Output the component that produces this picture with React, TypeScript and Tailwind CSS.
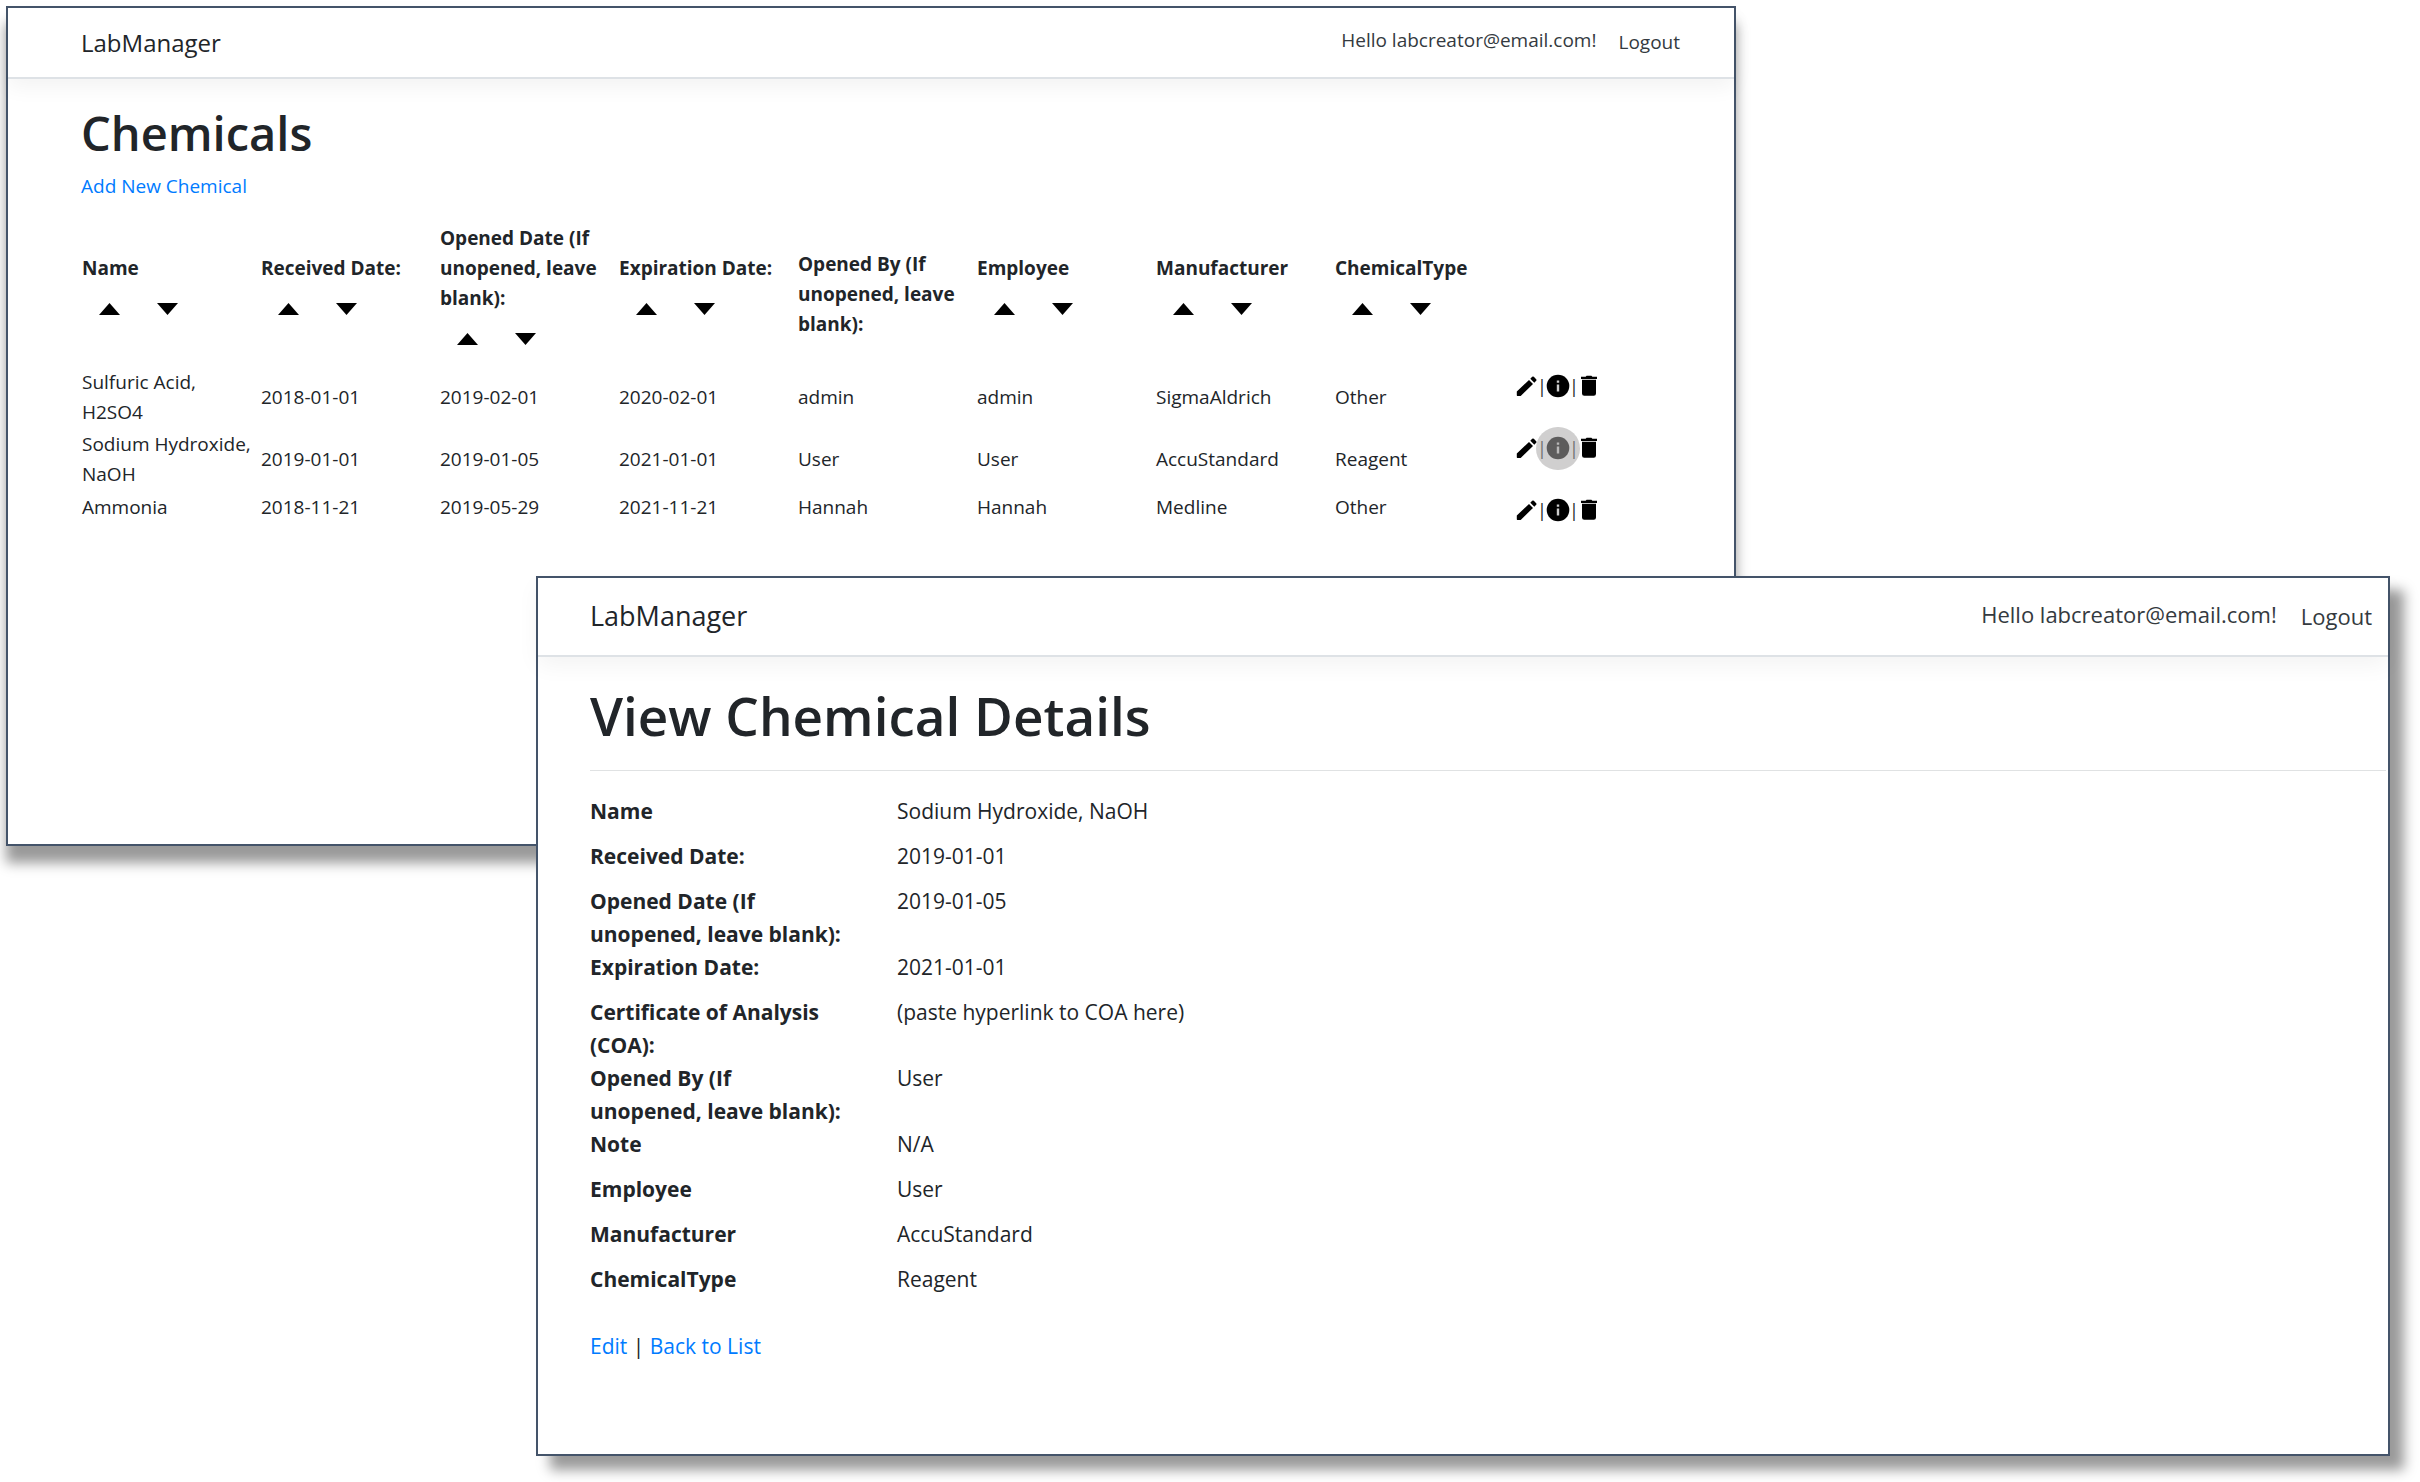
import React from "react";

const labels = ["Name", "Received Date:", "Opened Date (If unopened, leave blank):", "Expiration Date:", "Opened By (If unopened, leave blank):", "Employee", "Manufacturer", "ChemicalType"];

const rows = [
  ["Sulfuric Acid, H2SO4", "2018-01-01", "2019-02-01", "2020-02-01", "admin", "admin", "SigmaAldrich", "Other"],
  ["Sodium Hydroxide, NaOH", "2019-01-01", "2019-01-05", "2021-01-01", "User", "User", "AccuStandard", "Reagent"],
  ["Ammonia", "2018-11-21", "2019-05-29", "2021-11-21", "Hannah", "Hannah", "Medline", "Other"],
];

const details = [
  ["Name", "Sodium Hydroxide, NaOH"],
  ["Received Date:", "2019-01-01"],
  ["Opened Date (If unopened, leave blank):", "2019-01-05"],
  ["Expiration Date:", "2021-01-01"],
  ["Certificate of Analysis (COA):", "(paste hyperlink to COA here)"],
  ["Opened By (If unopened, leave blank):", "User"],
  ["Note", "N/A"],
  ["Employee", "User"],
  ["Manufacturer", "AccuStandard"],
  ["ChemicalType", "Reagent"],
];

function SortButtons({ label }: { label: string }) {
  return (
    <div className="flex gap-1">
      <button type="button" aria-label={`Sort ${label} ascending`} className="flex h-[52px] w-[54px] items-center justify-center">
        <svg width="21" height="12" viewBox="0 0 21 12"><path d="M10.5 0 21 12H0z" /></svg>
      </button>
      <button type="button" aria-label={`Sort ${label} descending`} className="flex h-[52px] w-[54px] items-center justify-center">
        <svg width="21" height="12" viewBox="0 0 21 12"><path d="M0 0h21L10.5 12z" /></svg>
      </button>
    </div>
  );
}

function PencilIcon() {
  return (
    <svg width="22" height="22" viewBox="0 0 22 22">
      <path d="M.8 16.600 13 4.900l4 4L5.200 20.400q-.5.500-1.200.5H1.400q-.6 0-.6-.6z" />
      <path d="m14.300 3.700 1.900-1.900q.8-.7 1.600 0l2.400 2.400q.7.800 0 1.600l-1.900 1.900z" />
    </svg>
  );
}

function InfoIcon() {
  return (
    <svg width="24" height="24" viewBox="0 0 24 24">
      <circle cx="12" cy="12" r="11.3" />
      <path fill="#ccc" d="M10.800 10.400h2.400v7.200h-2.400zM10.800 6.500h2.400v2.200h-2.400z" />
    </svg>
  );
}

function TrashIcon() {
  return (
    <svg width="18" height="22" viewBox="0 0 18 22">
      <path d="M1 1.800h4.600l1-1h4.800l1 1H17v2.200H1zM2 4.800h14v13.700q0 2.300-2.300 2.300H4.300Q2 20.800 2 18.500z" />
    </svg>
  );
}

export default function App() {
  return (
    <main className="overflow-hidden bg-white pt-[6px] pb-[26px] font-['Open_Sans',sans-serif] text-[#212529]">
      <section className="mr-[684px] ml-[6px] border-2 border-[#44546a] bg-white pb-[320px] shadow-[0_17px_12px_rgba(0,0,0,0.4)]">
        <header className="flex h-[71px] items-center justify-between border-b-2 border-[#dee2e6] pr-[54px] pl-[73px] shadow-[0_8px_20px_rgba(0,0,0,0.05)]">
          <a href="#" className="text-2xl">LabManager</a>
          <nav className="flex items-center gap-[22px] text-[19px] text-[#343a40]">
            <span className="pb-[4px]">Hello labcreator@email.com!</span>
            <a href="#">Logout</a>
          </nav>
        </header>
        <div className="pl-[73px]">
          <h1 className="pt-[24px] text-[47px] leading-[60px] font-semibold">Chemicals</h1>
          <p className="pt-[8px] text-[19px] leading-[30px]"><a href="#" className="text-[#007bff]">Add New Chemical</a></p>
          <table className="mt-[20px] -ml-px w-[1530px] table-fixed border-separate border-spacing-[2px] text-left text-[19px] leading-[30px]">
            <thead>
              <tr>
                {labels.map((label, i) => (
                  <th key={label} className="w-[177px] p-0 align-middle font-bold">
                    {label}
                    {i !== 4 && <SortButtons label={label} />}
                  </th>
                ))}
                <td />
              </tr>
            </thead>
            <tbody>
              {rows.map((row, r) => (
                <tr key={row[0]}>
                  {row.map((cell, c) => <td key={c} className="p-0 align-middle">{cell}</td>)}
                  <td className="p-0 align-top">
                    <div className="flex items-center pt-[7px] pl-[2px] text-lg leading-6">
                      <button type="button" aria-label="Edit"><PencilIcon /></button>
                      <span className="flex w-2 justify-center">|</span>
                      <button type="button" aria-label="Details" className="relative">
                        <InfoIcon />
                        {r === 1 && <span className="absolute -top-[9px] -left-[10px] h-[43px] w-[44px] rounded-full bg-[#aaa8a8]/55" />}
                      </button>
                      <span className="flex w-2 justify-center">|</span>
                      <button type="button" aria-label="Delete" className="ml-[2px]"><TrashIcon /></button>
                    </div>
                  </td>
                </tr>
              ))}
            </tbody>
          </table>
        </div>
      </section>

      <section className="relative -mt-[270px] mr-[30px] ml-[536px] border-2 border-[#44546a] bg-white pb-[91px] shadow-[14px_14px_12px_rgba(0,0,0,0.4)]">
        <header className="flex h-[79px] items-center justify-between border-b-2 border-[#dee2e6] pr-[16px] pl-[52px] shadow-[0_8px_22px_rgba(0,0,0,0.05)]">
          <a href="#" className="text-[27px]">LabManager</a>
          <nav className="flex items-center gap-[24px] text-[22px] text-[#343a40]">
            <span className="pb-[4px]">Hello labcreator@email.com!</span>
            <a href="#">Logout</a>
          </nav>
        </header>
        <div className="pl-[52px]">
          <h1 className="pt-[26px] text-[53px] leading-[66px] font-semibold">View Chemical Details</h1>
          <hr className="mt-[21px] mr-[2px] border-[#e0e2e3]" />
          <dl className="mt-[24px] grid grid-cols-[256px_1fr] gap-x-[51px] text-[21px] leading-[33px]">
            {details.map(([label, value]) => (
              <React.Fragment key={label}>
                <dt className="min-h-[45px] font-bold">{label}</dt>
                <dd>{value}</dd>
              </React.Fragment>
            ))}
          </dl>
          <p className="mt-[22px] text-[21px] leading-[33px]">
            <a href="#" className="text-[#007bff]">Edit</a> | <a href="#" className="text-[#007bff]">Back to List</a>
          </p>
        </div>
      </section>
    </main>
  );
}
